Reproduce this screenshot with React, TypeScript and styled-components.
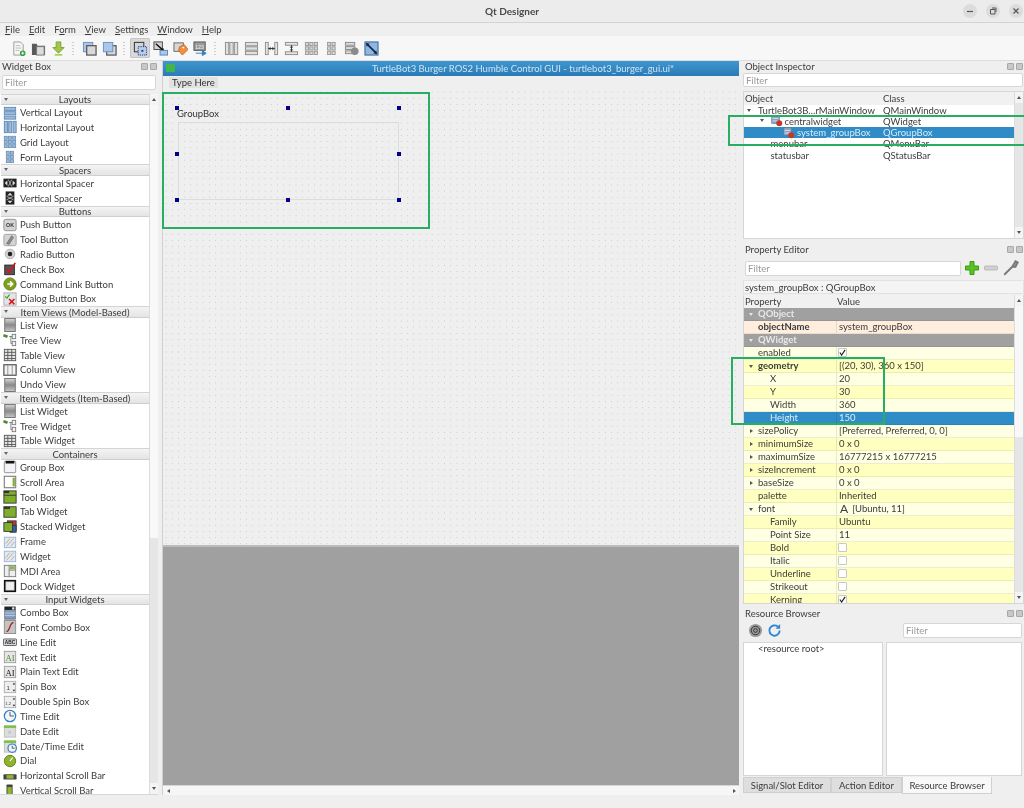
import { ReactNode } from "react";
import styled, { createGlobalStyle } from "styled-components";

const GlobalStyle = createGlobalStyle`
  html, body {
    margin: 0;
    padding: 0;
    background: #efefef;
  }
  * {
    box-sizing: border-box;
  }
`;

/* ---------- small icon drawings ---------- */

const blue = { fill: "#9dbbdc", stroke: "#5b86b3" };
const green = "#7fae2c";

const bars = (
  <g {...blue}>
    <rect x="1.5" y="1.5" width="13" height="3.5" />
    <rect x="1.5" y="6.5" width="13" height="3.5" />
    <rect x="1.5" y="11.5" width="13" height="3.5" />
  </g>
);
const columns = (
  <g {...blue}>
    <rect x="1.5" y="1.5" width="3.5" height="13" />
    <rect x="6.5" y="1.5" width="3.5" height="13" />
    <rect x="11.5" y="1.5" width="3.5" height="13" />
  </g>
);
const cells = (cols: number[], fill = "#9dbbdc", stroke = "#6d93ba") => (
  <g fill={fill} stroke={stroke}>
    {cols.map((x) =>
      [1.5, 6.2, 11].map((y) => <rect key={`${x}-${y}`} x={x} y={y} width="3.4" height="3.4" />),
    )}
  </g>
);
const listBox = (
  <>
    <defs>
      <linearGradient id="lv" x1="0" y1="0" x2="0" y2="1">
        <stop offset="0" stopColor="#d8d8d8" />
        <stop offset="0.5" stopColor="#8a8a8a" />
        <stop offset="1" stopColor="#c8c8c8" />
      </linearGradient>
    </defs>
    <rect x="2" y="0.5" width="12" height="15" fill="url(#lv)" stroke="#6a6a6a" />
  </>
);
const tree = (
  <>
    <rect x="0.5" y="2" width="5" height="3" fill="#4f8a2f" transform="rotate(20 3 3)" />
    <path d="M7 4h4M9 4v8h2" fill="none" stroke="#777" />
    <rect x="10.5" y="1.5" width="4" height="5" fill="#f2f2f2" stroke="#777" />
    <rect x="10.5" y="9.5" width="4" height="5" fill="#f2f2f2" stroke="#777" />
  </>
);
const table = (
  <>
    <rect x="1.5" y="1.5" width="13" height="13" fill="#e4e4e4" stroke="#555" />
    <path d="M1.5 5h13M1.5 8.5h13M1.5 12h13M5.5 1.5v13M10 1.5v13" stroke="#555" fill="none" />
  </>
);
const hatch = (
  <>
    <rect x="1.5" y="2.5" width="13" height="12" fill="#e8e8e8" stroke="#8fb3de" />
    <path d="M3 10l5-6M4 13l8-9M9 13l4-5" stroke="#aaa" fill="none" />
  </>
);
const keys = (label: string, color = "#222") => (
  <>
    <rect x="1.5" y="1.5" width="13" height="13" fill="#e6e6e6" stroke="#999" />
    <text x="8" y="12" fontSize="10" textAnchor="middle" fontFamily="Liberation Serif, serif" fill={color}>
      {label}
    </text>
  </>
);
const spin = (label: string) => (
  <>
    <rect x="1.5" y="1.5" width="13" height="13" fill="#eee" stroke="#aaa" />
    <text x="6" y="11" fontSize={label.length > 1 ? 5 : 7} textAnchor="middle" fontFamily="Liberation Sans, sans-serif" fill="#444">
      {label}
    </text>
    <path d="M11 5l1.5-2 1.5 2zM11 11l1.5 2 1.5-2z" fill="#222" />
  </>
);
const clock = (cx: number, cy: number, r: number) => (
  <>
    <circle cx={cx} cy={cy} r={r} fill="#f4f4f4" stroke="#2f7fc8" strokeWidth="1.4" />
    <path d={`M${cx} ${cy - r + 2}v${r - 2}h${r - 2}`} fill="none" stroke="#446" />
  </>
);
const calendar = (
  <>
    <rect x="1.5" y="3" width="13" height="12" fill="#dcdcdc" stroke="#bbb" />
    <rect x="1" y="1.5" width="14" height="3" fill="#7cc04b" />
    <rect x="6" y="8" width="3" height="3" fill="#b8c8dc" />
  </>
);

const widgetIcons: Record<string, ReactNode> = {
  "Vertical Layout": bars,
  "Horizontal Layout": columns,
  "Grid Layout": cells([1.5, 6.2, 11]),
  "Form Layout": cells([3.8, 8.5]),
  "Horizontal Spacer": (
    <>
      <rect x="0.5" y="3" width="15" height="10" fill="#222" />
      <path d="M2 8l3-3v6zM14 8l-3-3v6z" fill="#ddd" />
      <path d="M6 4l4 8M10 4l-4 8" stroke="#bbb" />
    </>
  ),
  "Vertical Spacer": (
    <>
      <rect x="3" y="0.5" width="10" height="15" fill="#222" />
      <path d="M8 2l-3 3h6zM8 14l-3-3h6z" fill="#ddd" />
      <path d="M4 6l8 4M12 6l-8 4" stroke="#bbb" />
    </>
  ),
  "Push Button": (
    <>
      <rect x="1" y="1.5" width="14" height="13" rx="2" fill="#d4d4d4" stroke="#8a8a8a" />
      <text x="8" y="10.5" fontSize="6" fontWeight="700" textAnchor="middle" fontFamily="Liberation Sans, sans-serif" fill="#333">
        OK
      </text>
    </>
  ),
  "Tool Button": (
    <>
      <rect x="1" y="1.5" width="14" height="13" rx="2" fill="#d4d4d4" stroke="#9a9a9a" />
      <path d="M10 3l-6 9 3 1 5-8z" fill="#8a8a8a" stroke="#555" strokeWidth="0.6" />
    </>
  ),
  "Radio Button": (
    <>
      <circle cx="8" cy="8" r="5.5" fill="#d2d2d2" stroke="#aaa" />
      <circle cx="8" cy="8" r="2.6" fill="#222" />
    </>
  ),
  "Check Box": (
    <>
      <rect x="2" y="3.5" width="11" height="11" fill="#555" stroke="#222" />
      <path d="M4 8l3 4 7-11" fill="none" stroke="#d8141c" strokeWidth="2" />
    </>
  ),
  "Command Link Button": (
    <>
      <circle cx="8" cy="8" r="7" fill="#7f9f1e" stroke="#5d7a10" />
      <path d="M5 8h5M8 5l3 3-3 3" fill="none" stroke="#fff" strokeWidth="1.8" />
    </>
  ),
  "Dialog Button Box": (
    <>
      <rect x="1" y="1" width="14" height="14" fill="#e4e4e4" stroke="#aaa" />
      <path d="M2.5 5l2 2 3-4" fill="none" stroke="#3aa63a" strokeWidth="1.5" />
      <path d="M7 8l6 6M13 8l-6 6" stroke="#d8141c" strokeWidth="2" />
    </>
  ),
  "List View": listBox,
  "Tree View": tree,
  "Table View": table,
  "Column View": (
    <>
      <rect x="1" y="2" width="14" height="12" fill="#f2f2f2" stroke="#555" strokeWidth="1.4" />
      <path d="M5.5 2v12M10.5 2v12" stroke="#888" />
    </>
  ),
  "Undo View": listBox,
  "List Widget": listBox,
  "Tree Widget": tree,
  "Table Widget": table,
  "Group Box": (
    <>
      <rect x="1.5" y="1.5" width="13" height="13" rx="1" fill="#f4f4f4" stroke="#888" />
      <rect x="3" y="1" width="10" height="3" fill="#111" />
    </>
  ),
  "Scroll Area": (
    <>
      <rect x="1.5" y="1.5" width="13" height="13" fill="#fff" stroke="#888" strokeWidth="1.4" />
      <rect x="11" y="3" width="2.5" height="10" fill={green} />
    </>
  ),
  "Tool Box": (
    <>
      <rect x="1" y="1" width="14" height="14" fill={green} stroke="#333" />
      <rect x="1" y="1" width="6" height="2.5" fill="#333" />
      <path d="M1 6h14" stroke="#333" />
    </>
  ),
  "Tab Widget": (
    <>
      <rect x="1" y="2" width="14" height="12" fill={green} stroke="#333" />
      <rect x="1" y="2" width="7" height="2.5" fill="#333" />
    </>
  ),
  "Stacked Widget": (
    <>
      <rect x="5" y="1" width="10" height="11" fill="#c23a2a" stroke="#333" />
      <rect x="8" y="6" width="7" height="8" fill="#2f62b0" stroke="#333" />
      <rect x="1" y="3" width="10" height="10" fill={green} stroke="#333" />
    </>
  ),
  Frame: hatch,
  Widget: hatch,
  "MDI Area": (
    <>
      <rect x="1.5" y="1.5" width="13" height="13" fill="#eee" stroke="#777" />
      <path d="M7 1.5v13M7 7h7.5" stroke="#777" />
      <rect x="8" y="2.5" width="5.5" height="3.5" fill="#8cb34a" />
    </>
  ),
  "Dock Widget": (
    <>
      <rect x="1" y="1" width="14" height="14" fill="#111" />
      <rect x="3" y="3" width="10" height="10" fill="#eee" stroke="#888" strokeDasharray="1 1" />
    </>
  ),
  "Combo Box": (
    <>
      <rect x="2" y="1" width="12" height="14" fill="#7f9dbd" stroke="#667" />
      <rect x="2" y="1" width="12" height="3.5" fill="#222" />
      <rect x="10.5" y="1.5" width="2.5" height="2.5" fill="#eee" />
      <path d="M2 8h12M2 11h12" stroke="#c8d4e0" />
    </>
  ),
  "Font Combo Box": (
    <>
      <rect x="1.5" y="0.5" width="13" height="15" fill="#c4c4c4" stroke="#888" />
      <path d="M4 13c4 1 3-10 8-10" fill="none" stroke="#a01818" strokeWidth="1.4" />
    </>
  ),
  "Line Edit": (
    <>
      <rect x="0.5" y="4.5" width="15" height="7.5" rx="1" fill="#d6d6d6" stroke="#555" />
      <text x="8" y="10.5" fontSize="5.5" fontWeight="700" textAnchor="middle" fontFamily="Liberation Sans, sans-serif" fill="#222">
        ABC
      </text>
    </>
  ),
  "Text Edit": keys("AI", "#4f8f2f"),
  "Plain Text Edit": keys("AI"),
  "Spin Box": spin("1"),
  "Double Spin Box": spin("1.2"),
  "Time Edit": clock(8, 8, 6.5),
  "Date Edit": calendar,
  "Date/Time Edit": (
    <>
      {calendar}
      {clock(10.5, 10.5, 4.8)}
    </>
  ),
  Dial: (
    <>
      <circle cx="8" cy="8" r="6.5" fill="#8fb52e" stroke="#5d7a10" />
      <path d="M8 8l3-4" stroke="#fff" strokeWidth="1.4" />
    </>
  ),
  "Horizontal Scroll Bar": (
    <>
      <rect x="0.5" y="6" width="15" height="6" rx="1" fill="#444" />
      <rect x="4" y="7" width="8" height="4" fill="#8fb52e" />
    </>
  ),
  "Vertical Scroll Bar": (
    <>
      <rect x="4" y="0.5" width="7" height="15" rx="1" fill="#444" />
      <rect x="5" y="3.5" width="5" height="8" fill="#8fb52e" />
    </>
  ),
};

const toolIcons: ReactNode[][] = [
  [
    <>
      <path d="M3 1h7l3 3v11H3z" fill="#f7f7f2" stroke="#999" />
      <path d="M5 5h5M5 7.5h6M5 10h4" stroke="#bbb" />
      <circle cx="12.5" cy="13" r="3" fill="#2f9e44" />
      <path d="M10.8 13h3.4M12.5 11.3v3.4" stroke="#fff" />
    </>,
    <>
      <path d="M1 3h5l1 2h8v10H1z" fill="#5a5a5a" />
      <rect x="6" y="6" width="8" height="9" fill="#dcdcdc" stroke="#777" />
    </>,
    <>
      <path d="M5.5 1h5v6H14l-6 6-6-6h3.5z" fill="#a3c74a" stroke="#7d9e34" />
      <rect x="4" y="14" width="8" height="1.6" fill="#a3c74a" />
    </>,
  ],
  [
    <>
      <rect x="1.5" y="1.5" width="10" height="10" fill="#a9c6ec" stroke="#6b8fbc" />
      <rect x="5" y="5" width="10" height="10" fill="#d8d8d8" stroke="#555" strokeWidth="1.3" />
    </>,
    <>
      <rect x="5" y="5" width="10" height="10" fill="#d8d8d8" stroke="#555" strokeWidth="1.3" />
      <rect x="1.5" y="1.5" width="10" height="10" fill="#a9c6ec" stroke="#6b8fbc" />
    </>,
  ],
  [
    <>
      <rect x="1.5" y="1.5" width="10" height="10" fill="#d6d6d6" stroke="#444" strokeWidth="1.2" />
      <rect x="5.5" y="6" width="9" height="9" fill="#b8cde8" stroke="#1c3f8c" strokeDasharray="1.4 1" />
      <rect x="9" y="9.5" width="2" height="2" fill="#1c3f8c" />
    </>,
    <>
      <rect x="1" y="1" width="9" height="8" fill="#d6d6d6" stroke="#444" />
      <path d="M3 3l8 7" stroke="#111" strokeWidth="1.5" />
      <path d="M12 11l-4-.5 3-3z" fill="#111" />
      <rect x="7.5" y="10" width="8" height="5" fill="#a9c6ec" stroke="#5b86b3" />
    </>,
    <>
      <rect x="1" y="2" width="10" height="9" fill="#d8d8d8" stroke="#666" />
      <path d="M7 6l5-2 4 5-6 6-4-5z" fill="#ef8f3f" stroke="#c9691f" />
      <circle cx="11" cy="7" r="1" fill="#fff" />
    </>,
    <>
      <rect x="1" y="1" width="12" height="9" fill="#9a9a9a" stroke="#555" />
      <text x="7" y="8" fontSize="5.5" textAnchor="middle" fontFamily="Liberation Sans, sans-serif" fill="#eef">
        123
      </text>
      <path d="M3 13h9M10 10.5l4 2.5-4 2.5z" fill="#2f7fc8" stroke="#2f7fc8" />
    </>,
  ],
  [
    <g fill="#e0e0e0" stroke="#8c8c8c">
      <rect x="1.5" y="1.5" width="3.6" height="13" />
      <rect x="6.2" y="1.5" width="3.6" height="13" />
      <rect x="11" y="1.5" width="3.6" height="13" />
    </g>,
    <g fill="#e0e0e0" stroke="#8c8c8c">
      <rect x="1.5" y="1.5" width="13" height="3.6" />
      <rect x="1.5" y="6.2" width="13" height="3.6" />
      <rect x="1.5" y="11" width="13" height="3.6" />
    </g>,
    <g fill="#e4e4e4" stroke="#8c8c8c">
      <rect x="1.5" y="1.5" width="3" height="13" />
      <rect x="11.5" y="1.5" width="3" height="13" />
      <path d="M4.5 8h7" stroke="#333" />
      <path d="M5 8l2-2v4zM11 8l-2-2v4z" fill="#333" stroke="none" />
    </g>,
    <g fill="#e4e4e4" stroke="#8c8c8c">
      <rect x="1.5" y="1.5" width="13" height="3" />
      <rect x="1.5" y="11.5" width="13" height="3" />
      <path d="M8 4.5v7" stroke="#333" />
      <path d="M8 5l-2 2h4zM8 11l-2-2h4z" fill="#333" stroke="none" />
    </g>,
    cells([1.5, 6.2, 11], "#d8d8d8", "#999"),
    cells([3.8, 8.5], "#d8d8d8", "#999"),
    <>
      <rect x="1.5" y="1.5" width="10" height="3" fill="#ddd" stroke="#888" />
      <rect x="1.5" y="6" width="10" height="3" fill="#ddd" stroke="#888" />
      <rect x="1.5" y="10.5" width="10" height="3" fill="#ddd" stroke="#888" />
      <circle cx="11.5" cy="11" r="4" fill="#8a8a8a" />
    </>,
    <>
      <rect x="1" y="1" width="14" height="14" fill="#8fb6df" stroke="#305f94" />
      <path d="M3 3l10 10" stroke="#0e2a44" strokeWidth="1.8" />
      <path d="M2 2l4 1-3 3zM14 14l-4-1 3-3z" fill="#0e2a44" />
    </>,
  ],
];

function Glyph({ size = 15, children }: { size?: number; children: ReactNode }) {
  return (
    <svg width={size} height={size} viewBox="0 0 16 16" style={{ flex: "none" }}>
      {children}
    </svg>
  );
}

/* ---------- data ---------- */

// before, mnemonic letter, after
const menus = [
  ["", "F", "ile"],
  ["", "E", "dit"],
  ["F", "o", "rm"],
  ["", "V", "iew"],
  ["", "S", "ettings"],
  ["", "W", "indow"],
  ["", "H", "elp"],
];

const widgetBox: [string, string[]][] = [
  ["Layouts", ["Vertical Layout", "Horizontal Layout", "Grid Layout", "Form Layout"]],
  ["Spacers", ["Horizontal Spacer", "Vertical Spacer"]],
  ["Buttons", ["Push Button", "Tool Button", "Radio Button", "Check Box", "Command Link Button", "Dialog Button Box"]],
  ["Item Views (Model-Based)", ["List View", "Tree View", "Table View", "Column View", "Undo View"]],
  ["Item Widgets (Item-Based)", ["List Widget", "Tree Widget", "Table Widget"]],
  ["Containers", ["Group Box", "Scroll Area", "Tool Box", "Tab Widget", "Stacked Widget", "Frame", "Widget", "MDI Area", "Dock Widget"]],
  ["Input Widgets", ["Combo Box", "Font Combo Box", "Line Edit", "Text Edit", "Plain Text Edit", "Spin Box", "Double Spin Box", "Time Edit", "Date Edit", "Date/Time Edit", "Dial", "Horizontal Scroll Bar", "Vertical Scroll Bar"]],
];

const objects = [
  { name: "TurtleBot3B…rMainWindow", cls: "QMainWindow", depth: 0, arrow: true },
  { name: "centralwidget", cls: "QWidget", depth: 1, arrow: true, icon: true },
  { name: "system_groupBox", cls: "QGroupBox", depth: 2, icon: true, selected: true },
  { name: "menubar", cls: "QMenuBar", depth: 1 },
  { name: "statusbar", cls: "QStatusBar", depth: 1 },
];

type Prop = {
  name: string;
  value?: string;
  kind?: "group" | "name" | "selected";
  bold?: boolean;
  sub?: boolean;
  arrow?: "open" | "closed";
  check?: "on" | "off";
  fontA?: boolean;
};

const properties: Prop[] = [
  { name: "QObject", kind: "group" },
  { name: "objectName", value: "system_groupBox", kind: "name", bold: true },
  { name: "QWidget", kind: "group" },
  { name: "enabled", check: "on" },
  { name: "geometry", value: "[(20, 30), 360 x 150]", bold: true, arrow: "open" },
  { name: "X", value: "20", sub: true },
  { name: "Y", value: "30", sub: true },
  { name: "Width", value: "360", sub: true },
  { name: "Height", value: "150", sub: true, kind: "selected" },
  { name: "sizePolicy", value: "[Preferred, Preferred, 0, 0]", arrow: "closed" },
  { name: "minimumSize", value: "0 x 0", arrow: "closed" },
  { name: "maximumSize", value: "16777215 x 16777215", arrow: "closed" },
  { name: "sizeIncrement", value: "0 x 0", arrow: "closed" },
  { name: "baseSize", value: "0 x 0", arrow: "closed" },
  { name: "palette", value: "Inherited" },
  { name: "font", value: "[Ubuntu, 11]", arrow: "open", fontA: true },
  { name: "Family", value: "Ubuntu", sub: true },
  { name: "Point Size", value: "11", sub: true },
  { name: "Bold", check: "off", sub: true },
  { name: "Italic", check: "off", sub: true },
  { name: "Underline", check: "off", sub: true },
  { name: "Strikeout", check: "off", sub: true },
  { name: "Kerning", check: "on", sub: true },
];

const handles = [
  [0, 0],
  [111, 0],
  [222, 0],
  [0, 46],
  [222, 46],
  [0, 92],
  [111, 92],
  [222, 92],
];

/* ---------- shell ---------- */

const Window = styled.div`
  position: relative;
  width: 1024px;
  height: 808px;
  overflow: hidden;
  background: #efefef;
  color: #3c3c3c;
  font-family: "Lato", "Noto Sans", sans-serif;
  font-size: 9.5px;
  display: flex;
  flex-direction: column;
  filter: blur(0.3px);
`;

const TitleBar = styled.div`
  height: 23px;
  flex: none;
  display: flex;
  align-items: center;
  justify-content: center;
  position: relative;
  background: #ececec;
  border-bottom: 1px solid #d4d4d4;
  font-weight: 700;
  font-size: 10px;
  color: #4a4a4a;
`;

const WindowButtons = styled.div`
  position: absolute;
  right: 1px;
  top: 4px;
  display: flex;
  gap: 9px;
`;

const WindowButton = styled.span`
  width: 14px;
  height: 14px;
  border-radius: 50%;
  background: #dcdcdc;
  display: flex;
  align-items: center;
  justify-content: center;
`;

const MenuBar = styled.div`
  height: 13px;
  flex: none;
  display: flex;
  align-items: center;
  gap: 9px;
  padding: 0 5px;
  background: #efefef;
`;

const Mnemonic = styled.span`
  text-decoration: underline;
`;

const ToolBar = styled.div`
  height: 24px;
  flex: none;
  display: flex;
  align-items: center;
  padding-left: 8px;
  background: #f7f7f7;
`;

const ToolGroup = styled.div`
  display: flex;
`;

const ToolSep = styled.div`
  width: 11px;
  height: 14px;
  margin: 3px 0 0;
  background-image: radial-gradient(circle, #cfcfcf 0.7px, transparent 0.9px);
  background-size: 2px 3px;
  background-repeat: repeat-y;
  background-position: 4px 0;
`;

const ToolButton = styled.div<{ $active?: boolean }>`
  width: 20px;
  height: 20px;
  display: flex;
  align-items: center;
  justify-content: center;
  border-radius: 2px;
  background: ${({ $active }) => ($active ? "#d9d9d9" : "transparent")};
  box-shadow: ${({ $active }) => ($active ? "inset 0 0 0 1px #c4c4c4" : "none")};
`;

const Body = styled.div`
  flex: 1;
  min-height: 0;
  display: flex;
  border-top: 1px solid #dcdcdc;
`;

const StatusBar = styled.div`
  height: 13px;
  flex: none;
  background: #efefef;
`;

/* ---------- docks ---------- */

const LeftDock = styled.div`
  width: 158px;
  flex: none;
  display: flex;
  flex-direction: column;
`;

const DockTitle = styled.div`
  height: 11px;
  flex: none;
  display: flex;
  align-items: center;
  justify-content: space-between;
  padding: 0 1px 1px 2px;
`;

const DockButtons = styled.div`
  display: flex;
  gap: 2px;
`;

const DockButton = styled.span`
  width: 7px;
  height: 7px;
  border-radius: 1px;
  background: #c8c8c8;
  border: 1px solid #a8a8a8;
`;

const FilterInput = styled.div<{ $width?: number }>`
  height: 15px;
  flex: none;
  width: ${({ $width }) => ($width ? `${$width}px` : "auto")};
  display: flex;
  align-items: center;
  padding-left: 2px;
  background: #fff;
  border: 1px solid #d6d6d6;
  border-radius: 2px;
  color: #9a9a9a;
`;

const WidgetFilter = styled(FilterInput)`
  margin: 3px 2px 0 2px;
`;

const ListFrame = styled.div`
  flex: 1;
  min-height: 0;
  margin-top: 3.5px;
  display: flex;
  border-bottom: 1px solid #d8d8d8;
`;

const ListBody = styled.div`
  flex: 1;
  min-width: 0;
  overflow: hidden;
  background: #fff;
  padding-left: 1px;
`;

const CategoryHeader = styled.div`
  height: 11.6px;
  display: flex;
  align-items: center;
  justify-content: center;
  position: relative;
  background: linear-gradient(#f4f4f4, #e4e4e4);
  border-top: 1px solid #d4d4d4;
  border-bottom: 1px solid #cfcfcf;
  color: #3c3c3c;
`;

const HeaderArrow = styled.span`
  position: absolute;
  left: 3px;
  top: 3px;
  width: 0;
  height: 0;
  border-left: 2.5px solid transparent;
  border-right: 2.5px solid transparent;
  border-top: 3px solid #666;
`;

const WidgetRow = styled.div`
  height: 14.85px;
  display: flex;
  align-items: center;
  gap: 3px;
  padding-left: 2px;
  white-space: nowrap;
`;

const ScrollBar = styled.div`
  width: 9px;
  flex: none;
  display: flex;
  flex-direction: column;
  align-items: center;
  background: #e6e6e6;
  border-left: 1px solid #dcdcdc;
`;

const ScrollButton = styled.div`
  width: 100%;
  height: 11px;
  flex: none;
  display: flex;
  align-items: center;
  justify-content: center;
  background: #f4f4f4;
`;

const UpArrow = styled.span`
  border-left: 2.5px solid transparent;
  border-right: 2.5px solid transparent;
  border-bottom: 3px solid #555;
`;

const DownArrow = styled.span`
  border-left: 2.5px solid transparent;
  border-right: 2.5px solid transparent;
  border-top: 3px solid #555;
`;

const ScrollThumb = styled.div<{ $height: number }>`
  width: 100%;
  height: ${({ $height }) => $height}px;
  flex: none;
  background: #f8f8f8;
`;

const ScrollRest = styled.div`
  flex: 1;
`;

/* ---------- centre ---------- */

const MdiArea = styled.div`
  flex: none;
  width: 577px;
  margin-left: 4px;
  display: flex;
  flex-direction: column;
  background: #a0a0a0;
  border-left: 1px solid #d0d0d0;
`;

const SubWindow = styled.div`
  height: 486px;
  flex: none;
  display: flex;
  flex-direction: column;
  background: #efefef;
  border-bottom: 2px solid #bcbcbc;
`;

const SubTitle = styled.div`
  height: 15px;
  flex: none;
  display: flex;
  align-items: center;
  justify-content: center;
  position: relative;
  padding-left: 144px;
  background: linear-gradient(#3f97d0, #2a7ab6);
  color: #cfe4f2;
`;

const SubIcon = styled.span`
  position: absolute;
  left: 3px;
  top: 3px;
  width: 9px;
  height: 8px;
  border-radius: 1px;
  background: #3fb54a;
`;

const FormMenu = styled.div`
  height: 13px;
  flex: none;
  display: flex;
  align-items: center;
  padding-left: 6px;
  background: #efefef;
`;

const TypeHere = styled.span`
  padding: 0 3px;
  background: #e2e2e2;
  color: #333;
`;

const FormCanvas = styled.div`
  flex: 1;
  position: relative;
  background-color: #efefef;
  background-image: radial-gradient(circle, #c6c6c6 0.55px, transparent 0.8px);
  background-size: 6.2px 6.2px;
`;

const GroupBox = styled.div`
  position: absolute;
  left: 14px;
  top: 19px;
  width: 222px;
  height: 92px;
`;

const GroupLabel = styled.span`
  position: absolute;
  left: 0;
  top: 0;
  color: #333;
`;

const GroupFrame = styled.div`
  position: absolute;
  left: 1px;
  right: 0;
  top: 14px;
  bottom: 0;
  border: 1px solid #dcdcdc;
`;

const Handle = styled.span<{ $x: number; $y: number }>`
  position: absolute;
  left: ${({ $x }) => $x - 2}px;
  top: ${({ $y }) => $y - 2}px;
  width: 4px;
  height: 4px;
  background: #00008b;
`;

const MdiRest = styled.div`
  flex: 1;
`;

const HScroll = styled.div`
  height: 10px;
  flex: none;
  display: flex;
  align-items: center;
  justify-content: space-between;
  padding: 0 3px 0 1px;
  background: #f6f6f6;
  border-top: 1px solid #d6d6d6;
`;

const LeftArrow = styled.span`
  border-top: 2.5px solid transparent;
  border-bottom: 2.5px solid transparent;
  border-right: 3px solid #555;
  margin-left: 3px;
`;

const RightArrow = styled.span`
  border-top: 2.5px solid transparent;
  border-bottom: 2.5px solid transparent;
  border-left: 3px solid #555;
`;

/* ---------- right column ---------- */

const RightDock = styled.div`
  width: 281px;
  flex: none;
  margin-left: 4px;
  display: flex;
  flex-direction: column;
`;

const InspectorFilter = styled(FilterInput)`
  margin: 1px 1px 0 0;
  height: 14px;
`;

const TreeFrame = styled.div`
  height: 148px;
  flex: none;
  margin-top: 4px;
  display: flex;
  background: #fff;
  border: 1px solid #d6d6d6;
`;

const TreeBody = styled.div`
  flex: 1;
  min-width: 0;
`;

const HeaderRow = styled.div`
  height: 12.5px;
  display: flex;
  align-items: center;
  background: #f1f1f1;
`;

const HeaderCell = styled.span<{ $width?: number }>`
  width: ${({ $width }) => ($width ? `${$width}px` : "auto")};
  flex: ${({ $width }) => ($width ? "none" : 1)};
  padding-left: 1px;
`;

const TreeRow = styled.div<{ $selected?: boolean }>`
  height: 11.25px;
  display: flex;
  align-items: center;
  white-space: nowrap;
  background: ${({ $selected }) => ($selected ? "#308cc6" : "transparent")};
  color: ${({ $selected }) => ($selected ? "#d8ecf8" : "#3c3c3c")};
`;

const TreeName = styled.span<{ $depth: number }>`
  width: 138px;
  flex: none;
  display: flex;
  align-items: center;
  gap: 2px;
  padding-left: ${({ $depth }) => 14 + $depth * 12.5}px;
  position: relative;
`;

const TreeArrow = styled.span<{ $depth: number }>`
  position: absolute;
  left: ${({ $depth }) => 3 + $depth * 12.5}px;
  top: 4px;
  border-left: 2.5px solid transparent;
  border-right: 2.5px solid transparent;
  border-top: 3px solid #555;
`;

const TreeClass = styled.span`
  flex: 1;
  padding-left: 1px;
`;

const TreeIcon = styled.span`
  display: inline-flex;
`;

const PanelGap = styled.div<{ $height: number }>`
  height: ${({ $height }) => $height}px;
  flex: none;
`;

const EditorBar = styled.div`
  height: 16px;
  flex: none;
  margin-top: 5px;
  display: flex;
  align-items: center;
  gap: 3px;
  padding-left: 2px;
`;

const ObjectLine = styled.div`
  height: 14px;
  flex: none;
  margin-top: 4px;
  display: flex;
  align-items: center;
  padding-left: 1px;
  background: #f4f4f4;
  border: 1px solid #e2e2e2;
`;

const PropertyFrame = styled.div`
  height: 309px;
  flex: none;
  margin-top: 1px;
  display: flex;
  overflow: hidden;
  border: 1px solid #d6d6d6;
  border-top: none;
  background: #fff;
`;

const PropertyBody = styled.div`
  flex: 1;
  min-width: 0;
  overflow: hidden;
`;

const rowBackground = (p: Prop, index: number) => {
  if (p.kind === "group") return "#a0a0a0";
  if (p.kind === "name") return "#ffeedd";
  if (p.kind === "selected") return "#308cc6";
  return index % 2 === 1 ? "#ffffe4" : "#ffffbf";
};

const PropertyRow = styled.div<{ $bg: string; $fg: string }>`
  height: 13px;
  display: flex;
  align-items: stretch;
  background: ${({ $bg }) => $bg};
  color: ${({ $fg }) => $fg};
  border-bottom: 1px solid rgba(0, 0, 0, 0.07);
  white-space: nowrap;
`;

const PropertyName = styled.span<{ $bold?: boolean; $sub?: boolean }>`
  width: 92px;
  flex: none;
  display: flex;
  align-items: center;
  position: relative;
  padding-left: ${({ $sub }) => ($sub ? 26 : 14)}px;
  font-weight: ${({ $bold }) => ($bold ? 700 : 400)};
`;

const PropertyValue = styled.span`
  flex: 1;
  display: flex;
  align-items: center;
  padding-left: 2px;
  border-left: 1px solid rgba(0, 0, 0, 0.09);
`;

const OpenArrow = styled.span`
  position: absolute;
  left: 5px;
  top: 5px;
  border-left: 2.5px solid transparent;
  border-right: 2.5px solid transparent;
  border-top: 3px solid #555;
`;

const ClosedArrow = styled.span`
  position: absolute;
  left: 6px;
  top: 4px;
  border-top: 2.5px solid transparent;
  border-bottom: 2.5px solid transparent;
  border-left: 3px solid #555;
`;

const GroupArrow = styled(OpenArrow)`
  border-top-color: #e8e8e8;
`;

const CheckBox = styled.span`
  width: 9px;
  height: 9px;
  margin-left: -1px;
  display: flex;
  align-items: center;
  justify-content: center;
  background: #fff;
  border: 1px solid #c8c8c8;
  border-radius: 1px;
`;

const FontLetter = styled.span`
  margin-right: 4px;
  margin-left: 1px;
  font-size: 12px;
  line-height: 1;
`;

const ResourceBar = styled.div`
  height: 17px;
  flex: none;
  margin-top: 3px;
  display: flex;
  align-items: center;
  gap: 4px;
  padding: 0 2px 0 5px;
`;

const ResourceFilter = styled(FilterInput)`
  margin-left: auto;
`;

const ResourcePanes = styled.div`
  height: 134px;
  flex: none;
  margin-top: 3px;
  display: flex;
  gap: 3px;
  padding-right: 2px;
`;

const ResourcePane = styled.div<{ $width?: number }>`
  width: ${({ $width }) => ($width ? `${$width}px` : "auto")};
  flex: ${({ $width }) => ($width ? "none" : 1)};
  background: #fff;
  border: 1px solid #d6d6d6;
  padding-left: 14px;
`;

const Tabs = styled.div`
  height: 17px;
  flex: none;
  margin-top: 1px;
  display: flex;
  align-items: flex-start;
`;

const Tab = styled.div<{ $active?: boolean; $width: number }>`
  width: ${({ $width }) => $width}px;
  height: ${({ $active }) => ($active ? 17 : 16)}px;
  display: flex;
  align-items: center;
  justify-content: center;
  background: ${({ $active }) => ($active ? "#f8f8f8" : "#dedede")};
  border: 1px solid #d0d0d0;
  border-top: ${({ $active }) => ($active ? "none" : "1px solid #d0d0d0")};
`;

/* ---------- annotations drawn over the screenshot ---------- */

const Callout = styled.div<{ $x: number; $y: number; $w: number; $h: number }>`
  position: absolute;
  left: ${({ $x }) => $x}px;
  top: ${({ $y }) => $y}px;
  width: ${({ $w }) => $w}px;
  height: ${({ $h }) => $h}px;
  border: 2px solid #27ae60;
  pointer-events: none;
`;

function DockHead({ title }: { title: string }) {
  return (
    <DockTitle>
      <span>{title}</span>
      <DockButtons>
        <DockButton />
        <DockButton />
      </DockButtons>
    </DockTitle>
  );
}

function VScroll({ thumb }: { thumb: number }) {
  return (
    <ScrollBar>
      <ScrollButton>
        <UpArrow />
      </ScrollButton>
      <ScrollThumb $height={thumb} />
      <ScrollRest />
      <ScrollButton>
        <DownArrow />
      </ScrollButton>
    </ScrollBar>
  );
}

const stackIcon = (
  <Glyph size={12}>
    <rect x="1" y="1" width="10" height="10" fill="#8ea4c4" stroke="#5f7695" />
    <path d="M2 4.5h8M2 8h8" stroke="#e8eef6" />
    <circle cx="11" cy="11" r="4" fill="#c0392b" />
  </Glyph>
);

const checkMark = (
  <svg width="7" height="7" viewBox="0 0 8 8">
    <path d="M1 4l2 3 4-6" fill="none" stroke="#222" strokeWidth="1.3" />
  </svg>
);

export default function App() {
  return (
    <>
      <GlobalStyle />
      <Window>
        <TitleBar>
          Qt Designer
          <WindowButtons>
            <WindowButton>
              <svg width="8" height="8" viewBox="0 0 8 8">
                <path d="M1 4.5h6" stroke="#555" strokeWidth="1.2" />
              </svg>
            </WindowButton>
            <WindowButton>
              <svg width="8" height="8" viewBox="0 0 8 8">
                <path d="M1.5 2.5h4.5v4.5h-4.5zM3 1h4v4" fill="none" stroke="#555" />
              </svg>
            </WindowButton>
            <WindowButton>
              <svg width="8" height="8" viewBox="0 0 8 8">
                <path d="M1.5 1.5l5 5M6.5 1.5l-5 5" stroke="#555" strokeWidth="1.2" />
              </svg>
            </WindowButton>
          </WindowButtons>
        </TitleBar>

        <MenuBar>
          {menus.map(([before, key, after]) => (
            <span key={key}>
              {before}
              <Mnemonic>{key}</Mnemonic>
              {after}
            </span>
          ))}
        </MenuBar>

        <ToolBar>
          {toolIcons.map((group, g) => (
            <ToolGroup key={g}>
              {g > 0 && <ToolSep />}
              {group.map((icon, i) => (
                <ToolButton key={i} $active={g === 2 && i === 0}>
                  <Glyph>{icon}</Glyph>
                </ToolButton>
              ))}
            </ToolGroup>
          ))}
        </ToolBar>

        <Body>
          <LeftDock>
            <DockHead title="Widget Box" />
            <WidgetFilter>Filter</WidgetFilter>
            <ListFrame>
              <ListBody>
                {widgetBox.map(([title, items]) => (
                  <div key={title}>
                    <CategoryHeader>
                      <HeaderArrow />
                      {title}
                    </CategoryHeader>
                    {items.map((item) => (
                      <WidgetRow key={item}>
                        <Glyph size={14}>{widgetIcons[item]}</Glyph>
                        {item}
                      </WidgetRow>
                    ))}
                  </div>
                ))}
              </ListBody>
              <VScroll thumb={433} />
            </ListFrame>
          </LeftDock>

          <MdiArea>
            <SubWindow>
              <SubTitle>
                <SubIcon />
                TurtleBot3 Burger ROS2 Humble Control GUI - turtlebot3_burger_gui.ui*
              </SubTitle>
              <FormMenu>
                <TypeHere>Type Here</TypeHere>
              </FormMenu>
              <FormCanvas>
                <GroupBox>
                  <GroupLabel>GroupBox</GroupLabel>
                  <GroupFrame />
                  {handles.map(([x, y]) => (
                    <Handle key={`${x}-${y}`} $x={x} $y={y} />
                  ))}
                </GroupBox>
              </FormCanvas>
            </SubWindow>
            <MdiRest />
            <HScroll>
              <LeftArrow />
              <RightArrow />
            </HScroll>
          </MdiArea>

          <RightDock>
            <DockHead title="Object Inspector" />
            <InspectorFilter>Filter</InspectorFilter>
            <TreeFrame>
              <TreeBody>
                <HeaderRow>
                  <HeaderCell $width={138}>Object</HeaderCell>
                  <HeaderCell>Class</HeaderCell>
                </HeaderRow>
                {objects.map((o) => (
                  <TreeRow key={o.name} $selected={o.selected}>
                    <TreeName $depth={o.depth}>
                      {o.arrow && <TreeArrow $depth={o.depth} />}
                      {o.icon && <TreeIcon>{stackIcon}</TreeIcon>}
                      {o.name}
                    </TreeName>
                    <TreeClass>{o.cls}</TreeClass>
                  </TreeRow>
                ))}
              </TreeBody>
              <VScroll thumb={0} />
            </TreeFrame>

            <PanelGap $height={5} />
            <DockHead title="Property Editor" />
            <EditorBar>
              <FilterInput $width={216}>Filter</FilterInput>
              <Glyph size={16}>
                <path d="M6 1.5h4v4.5h4.5v4H10v4.5H6V10H1.5V6H6z" fill="#58c322" stroke="#3d9a12" />
              </Glyph>
              <Glyph size={16}>
                <rect x="1.5" y="6" width="13" height="4" rx="1" fill="#d0d0d0" stroke="#bbb" />
              </Glyph>
              <Glyph size={18}>
                <path d="M2 14l8-8M9 7l3-5 2 1-2 4z" stroke="#777" strokeWidth="1.6" fill="#999" />
              </Glyph>
            </EditorBar>
            <ObjectLine>system_groupBox : QGroupBox</ObjectLine>
            <PropertyFrame>
              <PropertyBody>
                <HeaderRow>
                  <HeaderCell $width={92}>Property</HeaderCell>
                  <HeaderCell>Value</HeaderCell>
                </HeaderRow>
                {properties.map((p, i) => (
                  <PropertyRow
                    key={p.name}
                    $bg={rowBackground(p, i)}
                    $fg={p.kind === "group" ? "#e8e8e8" : p.kind === "selected" ? "#d8ecf8" : "#3c3c3c"}
                  >
                    <PropertyName $bold={p.bold || p.kind === "group"} $sub={p.sub}>
                      {p.kind === "group" && <GroupArrow />}
                      {p.arrow === "open" && <OpenArrow />}
                      {p.arrow === "closed" && <ClosedArrow />}
                      {p.name}
                    </PropertyName>
                    {p.kind !== "group" && (
                      <PropertyValue>
                        {p.fontA && <FontLetter>A</FontLetter>}
                        {p.check && <CheckBox>{p.check === "on" && checkMark}</CheckBox>}
                        {p.value}
                      </PropertyValue>
                    )}
                  </PropertyRow>
                ))}
              </PropertyBody>
              <VScroll thumb={131} />
            </PropertyFrame>

            <PanelGap $height={4} />
            <DockHead title="Resource Browser" />
            <ResourceBar>
              <Glyph size={15}>
                <circle cx="8" cy="8" r="7" fill="#9a9a9a" />
                <circle cx="8" cy="8" r="4.5" fill="none" stroke="#333" />
                <circle cx="8" cy="8" r="2" fill="none" stroke="#333" />
              </Glyph>
              <Glyph size={15}>
                <path d="M13.5 8a5.5 5.5 0 1 1-2-4.2" fill="none" stroke="#2f86d6" strokeWidth="2" />
                <path d="M14 1v5H9z" fill="#2f86d6" />
              </Glyph>
              <ResourceFilter $width={119}>Filter</ResourceFilter>
            </ResourceBar>
            <ResourcePanes>
              <ResourcePane $width={140}>&lt;resource root&gt;</ResourcePane>
              <ResourcePane />
            </ResourcePanes>
            <Tabs>
              <Tab $width={88}>Signal/Slot Editor</Tab>
              <Tab $width={71}>Action Editor</Tab>
              <Tab $width={90} $active>
                Resource Browser
              </Tab>
            </Tabs>
          </RightDock>
        </Body>
        <StatusBar />

        <Callout $x={162} $y={92} $w={268} $h={137} />
        <Callout $x={728} $y={115} $w={310} $h={31} />
        <Callout $x={731} $y={357} $w={154} $h={68} />
      </Window>
    </>
  );
}
